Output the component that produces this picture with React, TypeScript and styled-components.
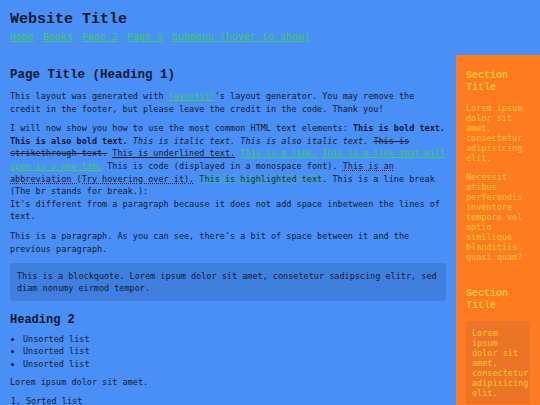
import styled, { createGlobalStyle } from "styled-components";

const GlobalStyle = createGlobalStyle`
    html, body {
        margin: 0;
        padding: 0;
        background: #4a8ff6;
    }
    body {
        width: 540px;
        height: 405px;
        overflow: hidden;
    }
`

const Page = styled.div`
    width: 540px;
    height: 405px;
    display: grid;
    grid-template-columns: 456px 84px;
    grid-template-rows: 55px 1fr;
    background: #4a8ff6;
    color: #0f1a30;
    font-family: "DejaVu Sans Mono", monospace;
    overflow: hidden;
`

const Header = styled.header`
    grid-column: 1 / 3;
    padding: 10px 10px 0;
    display: flex;
    flex-direction: column;
    gap: 2px;
`

const SiteTitle = styled.h1`
    margin: 0;
    font-family: "Liberation Mono", monospace;
    font-weight: 700;
    font-size: 15px;
    line-height: 19px;
`

const Nav = styled.nav`
    display: flex;
    gap: 9px;
    font-family: "Liberation Mono", monospace;
    font-size: 10px;
    line-height: 14px;
`

const Link = styled.a`
    color: #3fcc6c;
    text-decoration: underline;
`

const Main = styled.main`
    padding: 13px 10px 0;
    font-size: 8.5px;
    line-height: 12.6px;
`

const PageTitle = styled.h1`
    margin: 0 0 7px;
    font-family: "Liberation Mono", monospace;
    font-weight: 700;
    font-size: 12.5px;
    line-height: 15px;
`

const Heading = styled.h2`
    margin: 12px 0 4.5px;
    font-family: "Liberation Mono", monospace;
    font-weight: 700;
    font-size: 12px;
    line-height: 15px;
`

const Para = styled.p`
    margin: 0 0 7px;
`

const Strike = styled.s``

const Code = styled.code`
    font-family: "DejaVu Sans Mono", monospace;
    font-size: 1em;
`

const Abbr = styled.abbr`
    text-decoration: underline dotted;
`

const Mark = styled.mark`
    background: rgba(60, 190, 140, 0.18);
    color: #0a3a2a;
`

const Quote = styled.blockquote`
    margin: 8px 0 0;
    padding: 6.5px 7px;
    background: #417fdf;
    border-radius: 3px;
`

const BulletList = styled.ul`
    margin: 0 0 5px;
    padding-left: 13px;
    list-style: disc;
`

const NumberList = styled.ol`
    margin: 6px 0 0;
    padding-left: 16px;
`

const Sidebar = styled.aside`
    background: #ff7b22;
    color: #ffc52e;
    padding: 15px 10px 0;
    font-size: 8.5px;
    line-height: 10px;
`

const Section = styled.section`
    & + & {
        margin-top: 26px;
    }
`

const SectionTitle = styled.h3`
    margin: 0 0 9.5px;
    font-family: "Liberation Mono", monospace;
    font-weight: 700;
    font-size: 10px;
    line-height: 11.7px;
`

const SideText = styled.p`
    margin: 0 0 9.5px;
`

const SideCard = styled.div`
    background: #eb7426;
    border-radius: 3px;
    padding: 6.5px 6px;
`

const CardText = styled.p`
    margin: 0;
`

export default function App() {
    return (
        <>
            <GlobalStyle/>
            <Page>
                <Header>
                    <SiteTitle>Website Title</SiteTitle>
                    <Nav>
                        <Link href="#">Home</Link>
                        <Link href="#">Books</Link>
                        <Link href="#">Page 2</Link>
                        <Link href="#">Page 3</Link>
                        <Link href="#">Submenu (hover to show)</Link>
                    </Nav>
                </Header>

                <Main>
                    <PageTitle>Page Title (Heading 1)</PageTitle>
                    <Para>
                        This layout was generated with <Link href="#">layoutit!</Link>'s layout generator. You may remove
                        the credit in the footer, but please leave the credit in the code. Thank you!
                    </Para>
                    <Para>
                        I will now show you how to use the most common HTML text elements: <b>This is bold text.</b>{" "}
                        <strong>This is also bold text.</strong> <i>This is italic text.</i>{" "}
                        <em>This is also italic text.</em> <Strike>This is strikethrough text.</Strike>{" "}
                        <u>This is underlined text.</u> <Link href="#">This is a link.</Link>{" "}
                        <Link href="#">This is a link that will open in a new tab.</Link>{" "}
                        <Code>This is code</Code> (displayed in a monospace font).{" "}
                        <Abbr title="abbreviation">This is an abbreviation (Try hovering over it).</Abbr>{" "}
                        <Mark>This is highlighted text</Mark>. This is a line break (The br stands for break.):<br/>
                        It's different from a paragraph because it does not add space inbetween the lines of text.
                    </Para>
                    <Para>
                        This is a paragraph. As you can see, there's a bit of space between it and the previous
                        paragraph.
                    </Para>
                    <Quote>
                        This is a blockquote. Lorem ipsum dolor sit amet, consetetur sadipscing elitr, sed diam nonumy
                        eirmod tempor.
                    </Quote>
                    <Heading>Heading 2</Heading>
                    <BulletList>
                        <li>Unsorted list</li>
                        <li>Unsorted list</li>
                        <li>Unsorted list</li>
                    </BulletList>
                    <Para>Lorem ipsum dolor sit amet.</Para>
                    <NumberList>
                        <li>Sorted list</li>
                        <li>Sorted list</li>
                        <li>Sorted list</li>
                    </NumberList>
                </Main>

                <Sidebar>
                    <Section>
                        <SectionTitle>Section Title</SectionTitle>
                        <SideText>Lorem ipsum dolor sit amet, consectetur adipisicing elit.</SideText>
                        <SideText>
                            Necessit atibus perferendis inventore tempore vel optio similique blanditiis quasi quam?
                        </SideText>
                    </Section>
                    <Section>
                        <SectionTitle>Section Title</SectionTitle>
                        <SideCard>
                            <CardText>Lorem ipsum dolor sit amet, consectetur adipisicing elit.</CardText>
                        </SideCard>
                    </Section>
                </Sidebar>
            </Page>
        </>
    );
}
